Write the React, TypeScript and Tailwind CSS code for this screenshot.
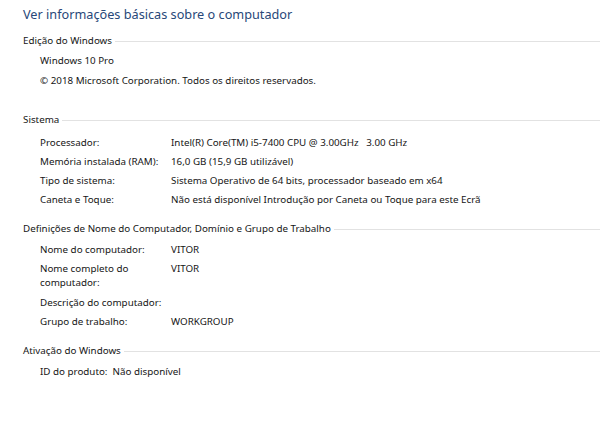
const font = { fontFamily: '"Noto Sans", "Open Sans", sans-serif' };

function Section({ title, className, children }: { title: string; className?: string; children: React.ReactNode }) {
  return (
    <section className={className}>
      <div className="flex items-center gap-[3px] h-[16px]">
        <span className="text-[9.8px] text-[#161616] whitespace-nowrap">{title}</span>
        <div className="flex-1 h-px bg-[#e2e2e2]" />
      </div>
      <div className="pl-[17px]">{children}</div>
    </section>
  );
}

function Row({ label, value }: { label: React.ReactNode; value?: string }) {
  return (
    <div className="flex text-[9.8px] text-[#161616] leading-[19px] h-[19px] whitespace-pre">
      <div className="w-[131px] shrink-0">{label}</div>
      <div>{value}</div>
    </div>
  );
}

export default function App() {
  return (
    <div className="w-[600px] h-[433px] bg-white overflow-hidden pl-[23px] pt-[4px]" style={font}>
      <h1 className="text-[12.7px] leading-[20px] text-[#284879]">
        Ver informações básicas sobre o computador
      </h1>

      <Section title="Edição do Windows" className="mt-[9px]">
        <div className="text-[9.8px] text-[#161616] leading-[14px] mt-[5px]">Windows 10 Pro</div>
        <div className="text-[9.8px] text-[#161616] leading-[14px] mt-[6px]">
          © 2018 Microsoft Corporation. Todos os direitos reservados.
        </div>
      </Section>

      <Section title="Sistema" className="mt-[24px]">
        <div className="mt-[5px]">
          <Row label="Processador:" value="Intel(R) Core(TM) i5-7400 CPU @ 3.00GHz   3.00 GHz" />
          <Row label="Memória instalada (RAM):" value="16,0 GB (15,9 GB utilizável)" />
          <Row label="Tipo de sistema:" value="Sistema Operativo de 64 bits, processador baseado em x64" />
          <Row label="Caneta e Toque:" value="Não está disponível Introdução por Caneta ou Toque para este Ecrã" />
        </div>
      </Section>

      <Section title="Definições de Nome do Computador, Domínio e Grupo de Trabalho" className="mt-[12px]">
        <div className="mt-[3px]">
          <Row label="Nome do computador:" value="VITOR" />
          <div className="flex text-[9.8px] text-[#161616] leading-[14px] mt-[3px]">
            <div className="w-[131px] shrink-0">
              Nome completo do
              <br />
              computador:
            </div>
            <div>VITOR</div>
          </div>
          <div className="mt-[3px]">
            <Row label="Descrição do computador:" />
            <Row label="Grupo de trabalho:" value="WORKGROUP" />
          </div>
        </div>
      </Section>

      <Section title="Ativação do Windows" className="mt-[12px]">
        <div className="text-[9.8px] text-[#161616] leading-[14px] mt-[6px] whitespace-pre">
          {'ID do produto:  Não disponível'}
        </div>
      </Section>
    </div>
  );
}
